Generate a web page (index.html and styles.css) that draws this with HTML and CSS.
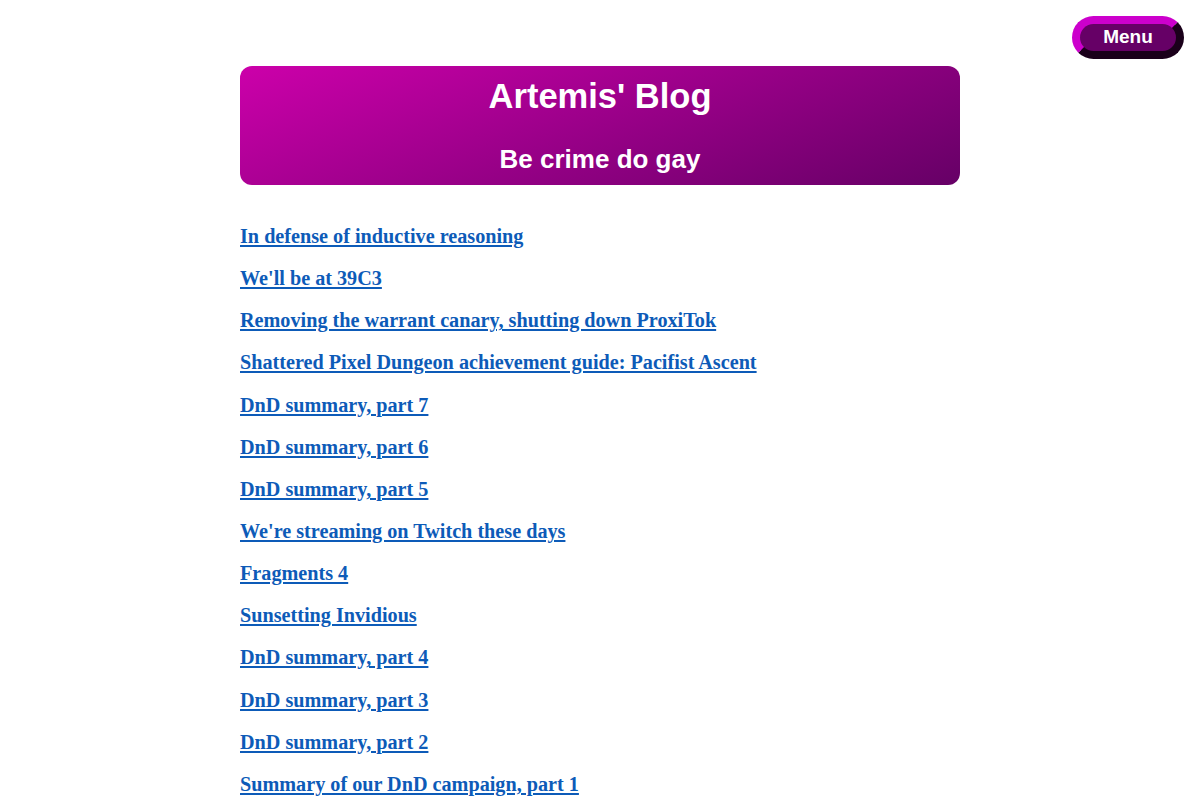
FILE: index.html
```html
<!DOCTYPE html>
<html lang="en">
<head>
    <meta charset="UTF-8">
    <meta name="viewport" content="width=device-width, initial-scale=1.0">
    <title>Artemis' Blog</title>
    <link rel="stylesheet" href="styles.css">
</head>
<body>

    <div class="topbar">
        <button class="menu-btn">Menu</button>
    </div>

    <main class="page">
        <header class="banner">
            <h1>Artemis' Blog</h1>
            <h2>Be crime do gay</h2>
        </header>

        <!-- Lista de posts -->
        <ul class="posts">
            <li><a href="#">In defense of inductive reasoning</a></li>
            <li><a href="#">We'll be at 39C3</a></li>
            <li><a href="#">Removing the warrant canary, shutting down ProxiTok</a></li>
            <li><a href="#">Shattered Pixel Dungeon achievement guide: Pacifist Ascent</a></li>
            <li><a href="#">DnD summary, part 7</a></li>
            <li><a href="#">DnD summary, part 6</a></li>
            <li><a href="#">DnD summary, part 5</a></li>
            <li><a href="#">We're streaming on Twitch these days</a></li>
            <li><a href="#">Fragments 4</a></li>
            <li><a href="#">Sunsetting Invidious</a></li>
            <li><a href="#">DnD summary, part 4</a></li>
            <li><a href="#">DnD summary, part 3</a></li>
            <li><a href="#">DnD summary, part 2</a></li>
            <li><a href="#">Summary of our DnD campaign, part 1</a></li>
        </ul>
    </main>

</body>
</html>
```

FILE: styles.css
```css
/* --- base --- */
:root {
    --magenta: #cc00aa;
    --plum: #660066;
    --link: #0d5bb8;
}
* { margin: 0; padding: 0; box-sizing: border-box; }
body {
    font-family: "Liberation Serif", "Times New Roman", serif;
    background: #fff;
    color: #000;
}

/* --- menu button --- */
.topbar {
    display: flex;
    justify-content: flex-end;
    padding: 16px 16px 0 0;
    height: 66px;
}
.menu-btn {
    height: 43px;
    width: 112px;
    padding-bottom: 2px;
    border: 8px solid;
    border-color: #cc00cc #1a001a #1a001a #cc00cc;
    border-radius: 999px;
    background: var(--plum);
    color: #fff;
    font-family: "Liberation Sans", Arial, sans-serif;
    font-weight: 700;
    font-size: 19px;
    cursor: pointer;
}

/* --- banner --- */
.page {
    width: 720px;
    margin: 0 auto;
}
.banner {
    background: linear-gradient(160deg, var(--magenta) 0%, var(--plum) 100%);
    border-radius: 12px;
    color: #fff;
    text-align: center;
    font-family: "Liberation Sans", Arial, sans-serif;
    padding: 8px 0 10px;
}
.banner h1 { font-size: 34.5px; line-height: 44px; }
.banner h2 { font-size: 26px; line-height: 32px; margin-top: 25px; }

/* --- posts --- */
.posts {
    list-style: none;
    display: flex;
    flex-direction: column;
    gap: 18.95px;
    margin-top: 40px;
}
.posts li { font-size: 20.2px; line-height: 23.2px; font-weight: 700; }
.posts a { color: var(--link); }
```
